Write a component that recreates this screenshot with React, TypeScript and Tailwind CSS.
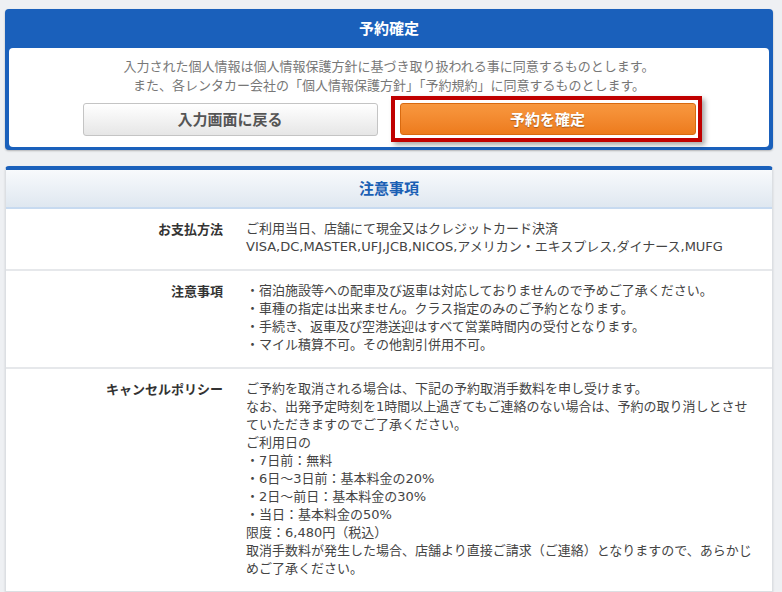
const font = { fontFamily: '"DejaVu Sans", "Noto Sans CJK JP", sans-serif' };
const cjk = { fontFamily: '"Noto Sans CJK JP", sans-serif' };

const rows: { label: string; lines: string[] }[] = [
  {
    label: "お支払方法",
    lines: [
      "ご利用当日、店舗にて現金又はクレジットカード決済",
      "VISA,DC,MASTER,UFJ,JCB,NICOS,アメリカン・エキスプレス,ダイナース,MUFG",
    ],
  },
  {
    label: "注意事項",
    lines: [
      "・宿泊施設等への配車及び返車は対応しておりませんので予めご了承ください。",
      "・車種の指定は出来ません。クラス指定のみのご予約となります。",
      "・手続き、返車及び空港送迎はすべて営業時間内の受付となります。",
      "・マイル積算不可。その他割引併用不可。",
    ],
  },
  {
    label: "キャンセルポリシー",
    lines: [
      "ご予約を取消される場合は、下記の予約取消手数料を申し受けます。",
      "なお、出発予定時刻を1時間以上過ぎてもご連絡のない場合は、予約の取り消しとさせ",
      "ていただきますのでご了承ください。",
      "ご利用日の",
      "・7日前：無料",
      "・6日～3日前：基本料金の20%",
      "・2日～前日：基本料金の30%",
      "・当日：基本料金の50%",
      "限度：6,480円（税込）",
      "取消手数料が発生した場合、店舗より直接ご請求（ご連絡）となりますので、あらかじ",
      "めご了承ください。",
    ],
  },
];

export default function App() {
  return (
    <div className="min-h-[592px] w-[782px] bg-[#eef0f3] pt-[9px]" style={cjk}>
      <div className="ml-[5px] w-[768px]">
        {/* confirm panel */}
        <div className="rounded-[4px] bg-[#1a60bb] px-[4px] pb-[3px] shadow-[0_1px_2px_rgba(0,0,0,0.25)]">
          <div className="flex h-[39px] items-center justify-center text-[15px] font-bold text-white">
            予約確定
          </div>
          <div className="rounded-[4px] bg-white pt-[8px] pb-[5px]">
            <p className="text-center text-[13px] leading-[19px] text-[#777]">
              入力された個人情報は個人情報保護方針に基づき取り扱われる事に同意するものとします。
              <br />
              また、各レンタカー会社の「個人情報保護方針」「予約規約」に同意するものとします。
            </p>
            <div className="mt-[2px] ml-[6px] flex items-center justify-center gap-[13px]">
              <button className="h-[33px] w-[295px] rounded-[3px] border border-[#c4c4c4] bg-gradient-to-b from-white to-[#e6e6e6] text-[15px] font-bold text-[#555]">
                入力画面に戻る
              </button>
              <div className="border-[4px] border-[#c00000] py-[3px] pl-[5px] pr-[2px] shadow-[3px_3px_5px_rgba(0,0,0,0.35)]">
                <button className="h-[32px] w-[296px] rounded-[3px] border border-[#d86a10] bg-gradient-to-b from-[#f8983f] to-[#ed7b1c] text-[15px] font-bold text-white [text-shadow:0_1px_1px_rgba(0,0,0,0.3)]">
                  予約を確定
                </button>
              </div>
            </div>
          </div>
        </div>

        {/* notes panel */}
        <div className="mt-[16px] overflow-hidden rounded-t-[4px] border-x border-b border-t-[4px] border-[#dcdfe3] border-t-[#1a60bb] bg-white shadow-[0_1px_2px_rgba(0,0,0,0.15)]">
          <div className="flex h-[39px] items-center justify-center border-b-2 border-[#c7daf0] bg-gradient-to-b from-[#f8fafc] to-[#dfe7f0] text-[15px] font-bold text-[#1a5fb4]">
            注意事項
          </div>
          {rows.map((row, i) => (
            <div
              key={row.label}
              className={`flex pt-[11px] pb-[13px] text-[13px] leading-[18px] ${i > 0 ? "border-t-2 border-[#e6e8eb]" : ""}`}
            >
              <div className="w-[240px] shrink-0 pr-[23px] text-right font-bold text-[#333]">
                {row.label}
              </div>
              <div className="text-[#444]" style={font}>
                {row.lines.map((line) => (
                  <div key={line} className="whitespace-nowrap">
                    {line}
                  </div>
                ))}
              </div>
            </div>
          ))}
        </div>
      </div>
    </div>
  );
}
